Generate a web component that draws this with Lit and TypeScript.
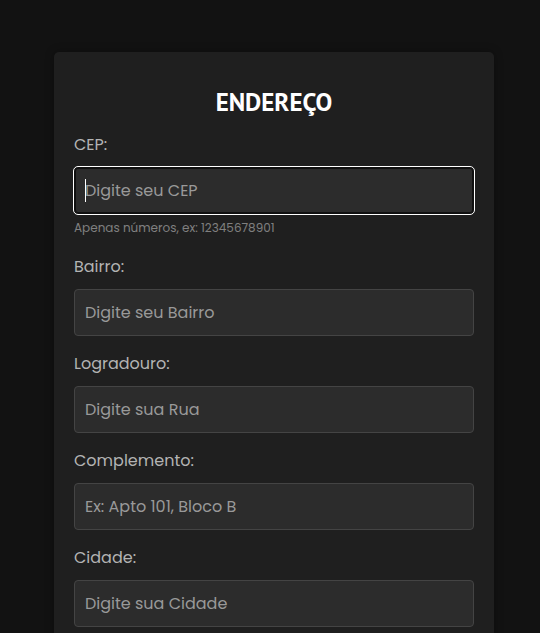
import { LitElement, html, css, nothing } from "lit";
import { customElement } from "lit/decorators.js";
import { classMap } from "lit/directives/class-map.js";

interface Field {
  id: string;
  label: string;
  placeholder: string;
  hint?: string;
  active?: boolean;
}

const FIELDS: Field[] = [
  { id: "cep", label: "CEP:", placeholder: "Digite seu CEP", hint: "Apenas números, ex: 12345678901", active: true },
  { id: "bairro", label: "Bairro:", placeholder: "Digite seu Bairro" },
  { id: "logradouro", label: "Logradouro:", placeholder: "Digite sua Rua" },
  { id: "complemento", label: "Complemento:", placeholder: "Ex: Apto 101, Bloco B" },
  { id: "cidade", label: "Cidade:", placeholder: "Digite sua Cidade" },
];

@customElement("app-root")
export class AppRoot extends LitElement {
  static styles = css`
    * {
      box-sizing: border-box;
    }
    :host {
      display: block;
      min-height: 100vh;
      box-sizing: border-box;
      padding: 52px 46px 0 54px;
      background: #121212;
      color: #b3b3b3;
      font: 16px/24px Poppins, Inter, sans-serif;
    }
    .card {
      max-width: 440px;
      margin: 0 auto;
      padding: 35px 20px 20px;
      border-radius: 5px;
      background: #1f1f1f;
      box-shadow: 0 0 10px rgba(0, 0, 0, 0.3);
    }
    .title {
      margin: 0 0 16px;
      color: #fff;
      font: bold 25px/30px "PT Sans", "Noto Sans", sans-serif;
      text-align: center;
    }
    .field {
      margin-bottom: 16px;
    }
    .label {
      display: block;
      margin-bottom: 10px;
    }
    .box {
      position: relative;
    }
    .input {
      display: block;
      width: 100%;
      height: 47px;
      padding: 10px;
      border: 1px solid #444;
      border-radius: 4px;
      background: #2c2c2c;
      color: #fff;
      font: inherit;
    }
    .input::placeholder {
      color: #999;
      opacity: 1;
    }
    .input:focus,
    .input.active {
      border-color: #101010;
      outline: 1px solid #fff;
      outline-offset: 0;
      box-shadow: inset 0 0 0 1px #101010;
      caret-color: transparent;
    }
    .caret {
      position: absolute;
      top: 12px;
      left: 11px;
      width: 1px;
      height: 23px;
      background: #fff;
    }
    .hint {
      margin: 5px 0 18px;
      color: #808080;
      font-size: 12px;
      line-height: 18px;
    }
  `;

  private renderField(f: Field) {
    return html`
      <div class="field">
        <label class="label" for=${f.id}>${f.label}</label>
        <div class="box">
          <input
            class=${classMap({ input: true, active: !!f.active })}
            id=${f.id}
            type="text"
            placeholder=${f.placeholder}
          />
          ${f.active ? html`<span class="caret"></span>` : nothing}
        </div>
        ${f.hint ? html`<p class="hint">${f.hint}</p>` : nothing}
      </div>
    `;
  }

  render() {
    return html`
      <form class="card">
        <h2 class="title">ENDEREÇO</h2>
        ${FIELDS.map((f) => this.renderField(f))}
      </form>
    `;
  }
}
